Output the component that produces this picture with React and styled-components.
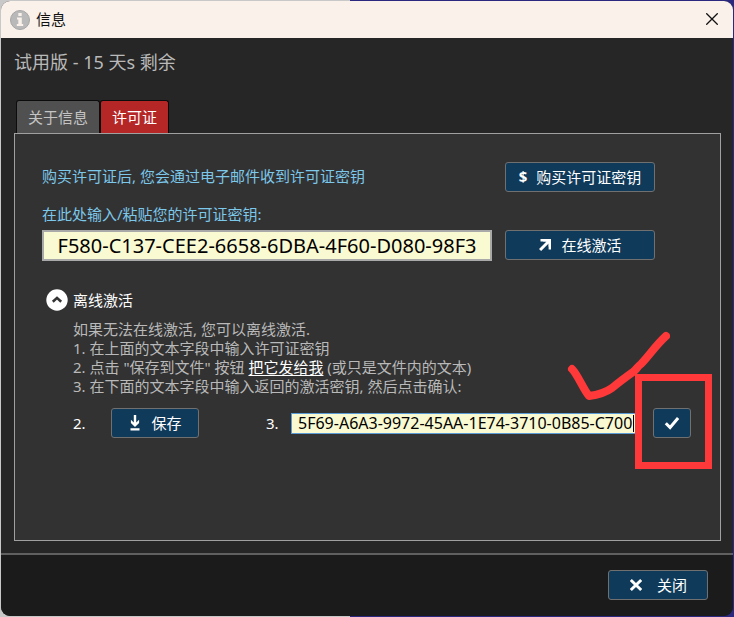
import React, { useState } from "react";
import styled, { createGlobalStyle } from "styled-components";

const offlineSteps = {
  intro: "如果无法在线激活, 您可以离线激活.",
  first: "1. 在上面的文本字段中输入许可证密钥",
  third: "3. 在下面的文本字段中输入返回的激活密钥, 然后点击确认:",
};

const App = () => {
  const [activeTab, setActiveTab] = useState("license");
  const [licenseKey, setLicenseKey] = useState("F580-C137-CEE2-6658-6DBA-4F60-D080-98F3");
  const [activationKey, setActivationKey] = useState("5F69-A6A3-9972-45AA-1E74-3710-0B85-C700");
  const [offlineOpen, setOfflineOpen] = useState(true);

  return (
    <Desktop>
      <GlobalStyle />
      <Dialog role="dialog" aria-labelledby="dialog-title">
        <TitleBar>
          <svg width="20" height="20" viewBox="0 0 20 20" aria-hidden="true">
            <circle cx="10" cy="10" r="9.5" fill="#b9b9b9" stroke="#a6a6a6" />
            <path d="M8.3 3h3.4v3H8.3zM7 7.5h4.8v6.6h1.4v2H6.8v-2h1.5V9.5H7z" fill="#faf1eb" />
          </svg>
          <Title id="dialog-title">信息</Title>
          <WindowClose aria-label="Close">
            <svg width="12" height="12" viewBox="0 0 12 12">
              <path d="M0.3 0.3l11.4 11.4M11.7 0.3L0.3 11.7" stroke="#111" strokeWidth="1.3" />
            </svg>
          </WindowClose>
        </TitleBar>

        <Main>
          <Status>试用版 - 15 天s 剩余</Status>
          <Tabs role="tablist">
            <Tab role="tab" aria-selected={activeTab === "about"} $active={activeTab === "about"} onClick={() => setActiveTab("about")}>
              关于信息
            </Tab>
            <Tab role="tab" aria-selected={activeTab === "license"} $active={activeTab === "license"} onClick={() => setActiveTab("license")}>
              许可证
            </Tab>
          </Tabs>

          <Panel role="tabpanel">
            <PurchaseRow>
              <Hint>购买许可证后, 您会通过电子邮件收到许可证密钥</Hint>
              <ActionButton>
                <Dollar aria-hidden="true">$</Dollar>
                购买许可证密钥
              </ActionButton>
            </PurchaseRow>

            <KeyLabel htmlFor="license-key">在此处输入/粘贴您的许可证密钥:</KeyLabel>
            <KeyRow>
              <KeyInput id="license-key" value={licenseKey} onChange={(e) => setLicenseKey(e.target.value)} />
              <ActionButton>
                <svg width="14" height="14" viewBox="0 0 14 14" aria-hidden="true">
                  <path d="M3 1h10v10l-2.400-2.400V5.500L3.100 13 1 10.900 8.500 3.400H5.400z" fill="#fff" />
                  <path d="M2.500 1H13v10.500h-2.400V3.400H2.500z" fill="#fff" />
                </svg>
                在线激活
              </ActionButton>
            </KeyRow>

            <Expander aria-expanded={offlineOpen} onClick={() => setOfflineOpen(!offlineOpen)}>
              <svg width="22" height="22" viewBox="0 0 22 22" aria-hidden="true">
                <circle cx="11" cy="11" r="10.7" fill="#fff" />
                <path d="M6.8 12.8L11 8.9l4.2 3.9" fill="none" stroke="#333" strokeWidth="2.6" />
              </svg>
              <span>离线激活</span>
            </Expander>

            {offlineOpen && (
              <Offline>
                <Line>{offlineSteps.intro}</Line>
                <Line>{offlineSteps.first}</Line>
                <Line>
                  2. 点击 "保存到文件" 按钮 <MailLink href="#">把它发给我</MailLink> (或只是文件内的文本)
                </Line>
                <Line>{offlineSteps.third}</Line>

                <OfflineRow>
                  <StepNumber $width={38}>2.</StepNumber>
                  <ActionButton $width={88}>
                    <svg width="14" height="16" viewBox="0 0 14 16" aria-hidden="true">
                      <path d="M5.8 0h2.4v7.4l2.9-2.6v3.1L7 12 2.9 7.9V4.8l2.9 2.6zM2.5 13.3h9v2.2h-9z" fill="#fff" />
                    </svg>
                    保存
                  </ActionButton>
                  <Spacer />
                  <StepNumber as="label" htmlFor="activation-key" $width={25}>3.</StepNumber>
                  <ActivationField>
                    <ActivationInput id="activation-key" value={activationKey} onChange={(e) => setActivationKey(e.target.value)} />
                    <Caret />
                  </ActivationField>
                  <Confirm>
                    <ActionButton $width={38} aria-label="确认">
                      <svg width="16" height="14" viewBox="0 0 16 14" aria-hidden="true">
                        <path d="M1.8 7.2l4.3 4.3 8-9.5" fill="none" stroke="#fff" strokeWidth="3" />
                      </svg>
                    </ActionButton>
                    <RedFrame />
                    <RedTick width="104" height="74" viewBox="0 0 104 74" aria-hidden="true">
                      <path
                        d="M6 38C12 44 17 58 23 65C31 64 39 62 46 57C52 52 60 46 67 41C71 38 70 37 75 33C83 25 89 15 100 5"
                        fill="none"
                        stroke="#ff3939"
                        strokeWidth="8"
                        strokeLinecap="round"
                        strokeLinejoin="round"
                      />
                    </RedTick>
                  </Confirm>
                </OfflineRow>
              </Offline>
            )}
          </Panel>
        </Main>

        <Footer>
          <ActionButton $width={100} $gap={14}>
            <svg width="14" height="14" viewBox="0 0 14 14" aria-hidden="true">
              <path d="M1.8 2l10.4 10M12.2 2L1.8 12" stroke="#fff" strokeWidth="3" />
            </svg>
            关闭
          </ActionButton>
        </Footer>
      </Dialog>
    </Desktop>
  );
};

const GlobalStyle = createGlobalStyle`
  * {
    box-sizing: border-box;
  }

  body {
    margin: 0;
  }

  body, button, input {
    font-family: "Noto Sans", "Noto Sans CJK SC", sans-serif;
    font-size: 15px;
  }
`;

const Desktop = styled.div`
  min-height: 100vh;
  padding: 1px;
  display: flex;
  background: linear-gradient(to right, #c8c8c8 350px, #2a287f 350px);
`;

const Dialog = styled.div`
  flex: 1;
  display: flex;
  flex-direction: column;
  overflow: hidden;
  border-radius: 9px;
  background: #262626;
`;

const TitleBar = styled.header`
  height: 37px;
  padding: 0 15px 0 9px;
  display: flex;
  align-items: center;
  gap: 6px;
  background: #faf1eb;
`;

const Title = styled.h1`
  margin: 0;
  padding-bottom: 3px;
  flex: 1;
  font-size: 15px;
  font-weight: 400;
  color: #111;
`;

const WindowClose = styled.button`
  display: flex;
  padding: 0 0 2px;
  border: none;
  background: none;
`;

const Main = styled.main`
  flex: 1;
  display: flex;
  flex-direction: column;
  padding: 12px 12px 12px 13px;
`;

const Status = styled.p`
  margin: 0 0 26px;
  font-size: 18px;
  line-height: 24px;
  color: #b9b9b9;
`;

const Tabs = styled.div`
  display: flex;
  padding-left: 2px;
`;

const Tab = styled.button`
  height: 33px;
  padding: 0 11px 2px;
  border: 1px solid #0c0c0c;
  border-bottom: none;
  border-radius: 3px 3px 0 0;
  color: ${(props) => (props.$active ? "#fff" : "#c4c4c4")};
  background: ${(props) => (props.$active ? "#b52727" : "#505050")};
`;

const Panel = styled.section`
  flex: 1;
  padding: 28px 29px 28px 27px;
  border: 1px solid #a0a0a0;
  background: #323232;
`;

const PurchaseRow = styled.div`
  display: grid;
  grid-template-columns: 1fr 150px;
  column-gap: 13px;
  align-items: center;
  margin-right: 36px;
`;

const KeyRow = styled(PurchaseRow)`
  align-items: start;
`;

const Hint = styled.p`
  margin: 0;
  padding-bottom: 2px;
  line-height: 20px;
  color: #7cc8ea;
`;

const KeyLabel = styled.label`
  display: block;
  margin: 12px 0 6px;
  line-height: 20px;
  color: #7cc8ea;
`;

const KeyInput = styled.input`
  width: 100%;
  height: 31px;
  padding: 0;
  border: 2px solid #a9a9a9;
  font-size: 20px;
  text-align: center;
  color: #000;
  background: #fafad2;
`;

const ActionButton = styled.button`
  width: ${(props) => (props.$width ? `${props.$width}px` : "100%")};
  height: 30px;
  padding: 0 0 2px;
  flex-shrink: 0;
  display: flex;
  align-items: center;
  justify-content: center;
  gap: ${(props) => props.$gap || 9}px;
  border: 1px solid #707070;
  border-radius: 3px;
  white-space: nowrap;
  color: #fff;
  background: #103a5a;

  svg {
    margin-top: 2px;
  }
`;

const Dollar = styled.span`
  font-weight: 700;
`;

const Expander = styled.button`
  display: flex;
  align-items: center;
  gap: 5px;
  height: 22px;
  margin: 28px 0 9px 4px;
  padding: 0;
  border: none;
  color: #fff;
  background: none;

  span {
    padding-bottom: 2px;
  }
`;

const Offline = styled.div`
  padding-left: 31px;
`;

const Line = styled.p`
  margin: 0;
  line-height: 19px;
  color: #b9b9b9;
`;

const MailLink = styled.a`
  color: #fff;
  text-underline-offset: 2px;
`;

const OfflineRow = styled.div`
  display: flex;
  align-items: center;
  margin-top: 12px;
`;

const StepNumber = styled.span`
  width: ${(props) => props.$width}px;
  flex-shrink: 0;
  color: #fff;
`;

const Spacer = styled.div`
  width: 67px;
`;

const ActivationField = styled.div`
  position: relative;
  flex: 1;
  margin-right: 14px;
`;

const ActivationInput = styled.input`
  display: block;
  width: 100%;
  height: 21px;
  padding: 0 0 0 6px;
  border: 1px solid #5b9bd5;
  font-size: 16px;
  color: #000;
  background: #fafad2;
`;

const Caret = styled.span`
  position: absolute;
  top: 2px;
  right: 5px;
  width: 1px;
  height: 17px;
  background: #000;
`;

const Confirm = styled.div`
  position: relative;
`;

const RedFrame = styled.div`
  position: absolute;
  top: -34px;
  left: -18px;
  width: 77px;
  height: 95px;
  border: 7px solid #ff3939;
  pointer-events: none;
`;

const RedTick = styled.svg`
  position: absolute;
  top: -77px;
  left: -87px;
  pointer-events: none;
`;

const Footer = styled.footer`
  display: flex;
  justify-content: flex-end;
  padding: 15px 25px 16px;
  border-top: 2px solid #606060;
  background: #1b1b1b;
`;

export default App;
